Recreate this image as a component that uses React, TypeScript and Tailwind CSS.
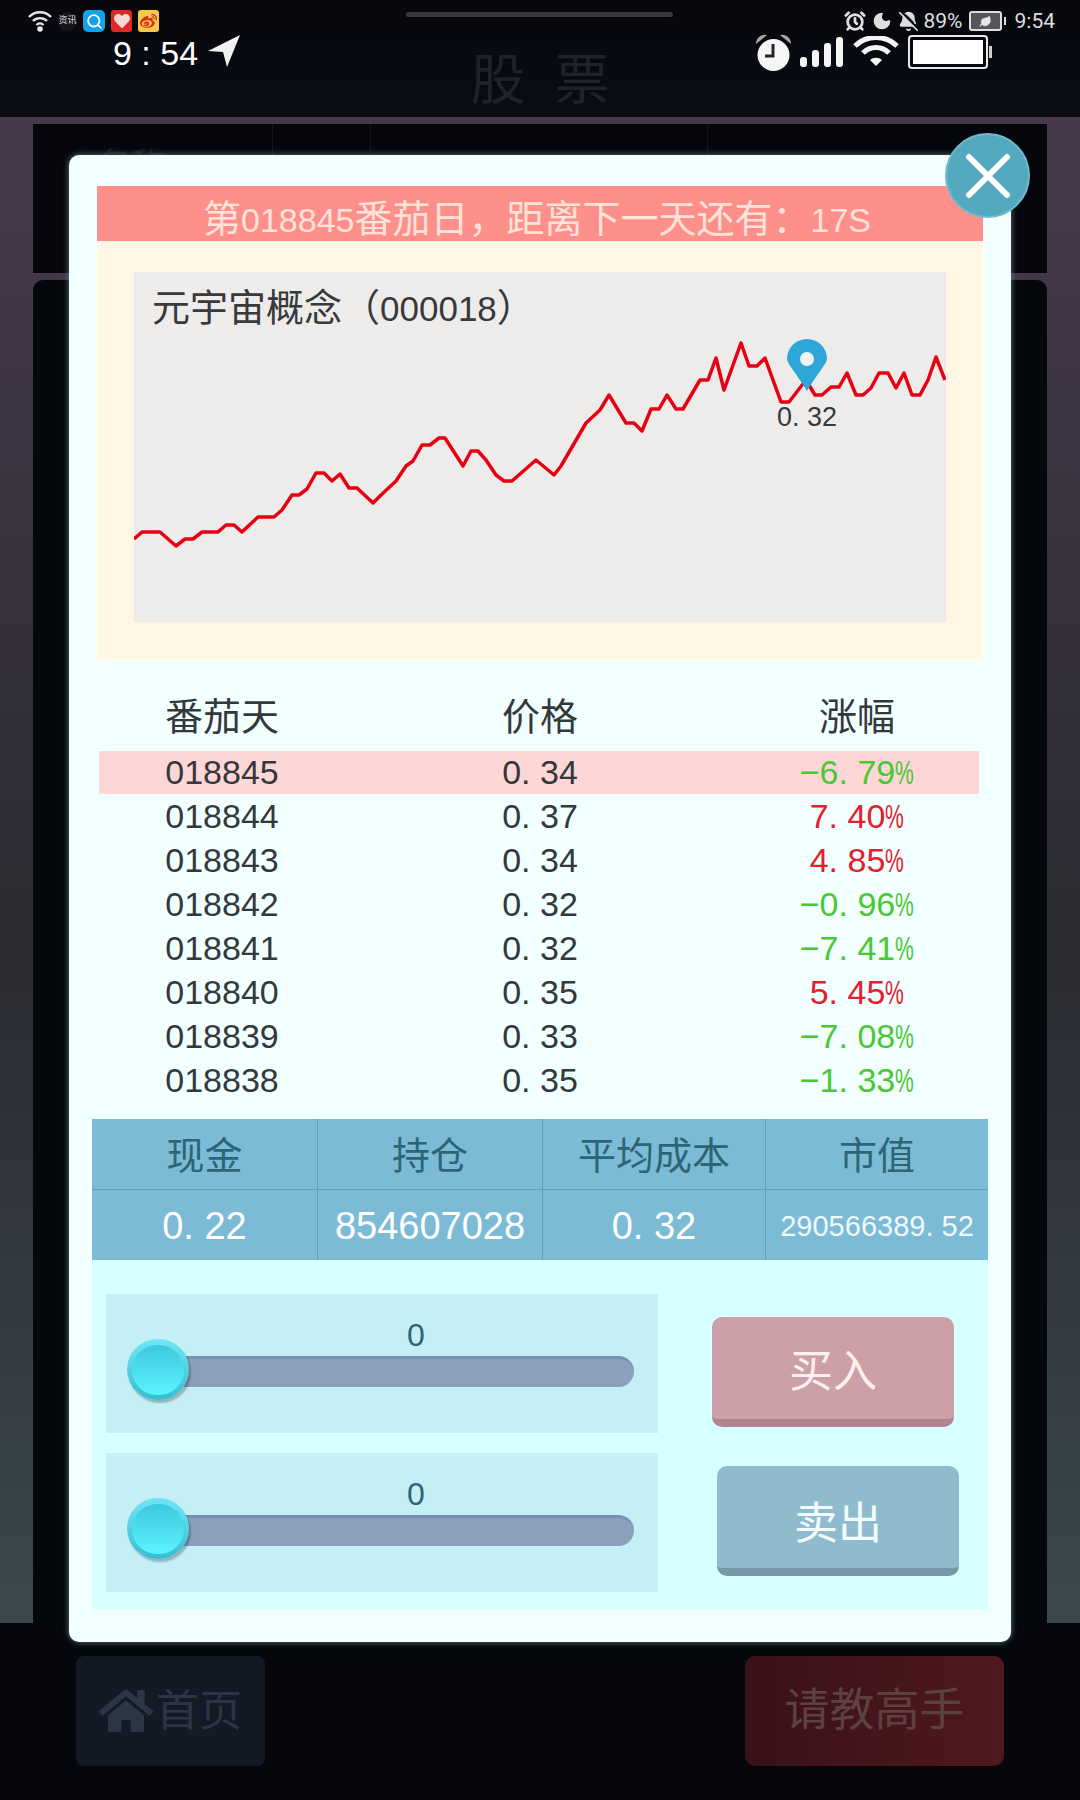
import { AlarmClock, BellOff, Leaf, Moon, Search } from 'lucide-react'
import { FaHeart, FaHome, FaWeibo } from 'react-icons/fa'

const ROWS = [
  { day: '018845', price: '0. 34', pct: '−6. 79', up: false },
  { day: '018844', price: '0. 37', pct: '7. 40', up: true },
  { day: '018843', price: '0. 34', pct: '4. 85', up: true },
  { day: '018842', price: '0. 32', pct: '−0. 96', up: false },
  { day: '018841', price: '0. 32', pct: '−7. 41', up: false },
  { day: '018840', price: '0. 35', pct: '5. 45', up: true },
  { day: '018839', price: '0. 33', pct: '−7. 08', up: false },
  { day: '018838', price: '0. 35', pct: '−1. 33', up: false },
]

// chart line, in px from the chart panel's top left corner
const LINE = [
  [0, 267], [8, 260], [26, 260], [42, 274], [51, 267], [59, 267], [68, 260], [84, 260], [92, 253], [100, 253],
  [108, 260], [124, 245], [140, 245], [148, 238], [158, 223], [165, 223], [173, 217], [182, 201], [190, 201],
  [198, 209], [206, 202], [215, 216], [223, 216], [239, 231], [247, 223], [262, 209], [272, 194], [279, 189],
  [288, 173], [296, 173], [305, 166], [311, 166], [329, 194], [337, 179], [344, 179], [352, 188], [362, 203],
  [370, 209], [378, 209], [402, 188], [420, 203], [427, 194], [452, 151], [466, 138], [475, 123], [492, 151],
  [500, 151], [508, 159], [517, 137], [525, 137], [533, 123], [542, 137], [549, 137], [566, 108], [574, 108],
  [582, 86], [590, 118], [607, 71], [615, 94], [623, 94], [631, 86], [647, 130], [655, 130], [672, 108],
  [681, 123], [688, 123], [697, 115], [705, 115], [713, 101], [722, 123], [729, 123], [737, 116], [745, 101],
  [754, 101], [762, 116], [770, 101], [778, 123], [786, 123], [794, 108], [802, 85], [811, 108],
]

function Pct({ value, up }: { value: string; up: boolean }) {
  return (
    <span className={up ? 'text-[#e5202e]' : 'text-[#48c832]'}>
      {value}
      <span className="inline-block w-[19px] origin-left scale-x-[0.62]">%</span>
    </span>
  )
}

function Slider() {
  return (
    <div className="h-[139px] bg-[#c4f0f5] pt-[21px]">
      <div className="h-[41px] pl-[68px] text-center text-[32px] leading-[40px] text-[#2d6577]">0</div>
      <div className="relative ml-[52px] h-[31px] w-[476px] rounded-r-full border-t-[3px] border-[#7590b0] bg-[#8aa0bd]">
        <div className="absolute -left-[31px] -top-[20px] flex h-[61px] w-[62px] items-center justify-center rounded-full bg-gradient-to-b from-[#6ee7f4] to-[#35bdd2] shadow-[2px_3px_2px_rgba(0,0,0,0.25)]">
          <div className="h-[50px] w-[52px] rounded-full bg-gradient-to-b from-[#3cc8e0] to-[#5cf4ff]" />
        </div>
      </div>
    </div>
  )
}

function StatusBar() {
  return (
    <div className="relative flex h-[43px] items-start justify-between bg-[#08090e] pl-[28px] pr-[25px] pt-[10px]">
      <div className="flex items-center">
        <svg width="24" height="22" viewBox="0 0 24 22" fill="none" stroke="#e8e8e8" strokeWidth="2.4">
          <path d="M1 7a15 15 0 0 1 22 0M5 11a10 10 0 0 1 14 0M8.5 15a5 5 0 0 1 7 0" />
          <circle cx="12" cy="19" r="1.6" fill="#e8e8e8" />
        </svg>
        <div className="ml-[6px] flex h-[19px] w-[19px] items-center justify-center rounded-full bg-[#15161b] text-[9px] text-[#d8d8d8]">资讯</div>
        <div className="ml-[6px] flex h-[22px] w-[22px] items-center justify-center rounded-[5px] bg-[#11a3ee]">
          <Search size={17} color="#fff" strokeWidth={2.6} />
        </div>
        <div className="ml-[6px] flex h-[22px] w-[21px] items-center justify-center rounded-[3px] bg-[#dc2a26]">
          <FaHeart size={16} color="#f6d9d5" />
        </div>
        <div className="ml-[6px] flex h-[22px] w-[21px] items-center justify-center rounded-[3px] bg-[#f7c948]">
          <FaWeibo size={17} color="#d92a1c" />
        </div>
      </div>
      <div className="absolute left-[406px] top-[12px] h-[5px] w-[267px] rounded-full bg-[#38393d]" />
      <div className="flex items-center text-[#dedede]">
        <AlarmClock size={22} strokeWidth={3} />
        <Moon size={20} fill="currentColor" className="ml-[6px]" />
        <BellOff size={21} fill="currentColor" className="ml-[6px]" />
        <span className="ml-[5px] font-['Roboto',sans-serif] text-[21px] leading-[22px]">89%</span>
        <div className="ml-[6px] flex h-[20px] w-[33px] items-center justify-center rounded-[3px] border-2 border-[#dedede] bg-[#55565a]">
          <Leaf size={13} fill="#e8e8e8" strokeWidth={1} />
        </div>
        <div className="ml-[2px] h-[8px] w-[2px] bg-[#dedede]" />
        <span className="ml-[9px] font-['Roboto',sans-serif] text-[21px] leading-[22px]">9:54</span>
      </div>
    </div>
  )
}

function Underlay() {
  return (
    <div className="flex h-[1800px] flex-col bg-[#05070b]">
      <StatusBar />
      <div className="flex h-[74px] items-center justify-center gap-[29px] bg-gradient-to-b from-[#070a11] to-[#0a0c12] text-[55px] text-[#1f2227]">
        <span>股</span>
        <span>票</span>
      </div>
      <div className="flex h-[1506px] flex-col bg-gradient-to-b from-[#47394c] via-[#2a2b31] via-55% to-[#3a484e] px-[33px] pt-[7px]">
        <div className="grid h-[149px] grid-cols-[240px_98px_337px_1fr] bg-[#06070d] text-[36px] text-[#16181e]">
          <div className="border-r border-[#14161c] pl-[62px] pt-[16px]">名称</div>
          <div className="border-r border-[#14161c]" />
          <div className="border-r border-[#14161c]" />
          <div />
        </div>
        <div className="mt-[7px] flex-1 rounded-t-[10px] bg-[#04070b]" />
      </div>
      <div className="flex flex-1 items-start justify-between bg-[#05070c] pl-[76px] pr-[76px] pt-[33px]">
        <div className="flex h-[110px] w-[189px] items-center justify-center rounded-[8px] bg-[#131925] text-[43px] text-[#2c3544]">
          <FaHome size={54} />
          <span className="ml-[3px]">首页</span>
        </div>
        <div className="flex h-[110px] w-[259px] items-center justify-center rounded-[10px] bg-gradient-to-r from-[#3a1116] to-[#4f191e] text-[45px] text-[#5d4040]">
          请教高手
        </div>
      </div>
    </div>
  )
}

function Modal() {
  const points = LINE.map(p => p.join(',')).join(' ')

  return (
    <div className="absolute left-[69px] top-[155px] h-[1487px] w-[942px] rounded-[10px] bg-[#f2ffff] pt-[31px] shadow-[0_0_6px_rgba(150,190,200,0.6)]">
      <button className="absolute left-[876px] -top-[22px] flex h-[85px] w-[85px] items-center justify-center rounded-full border-2 border-[#6dbccd] bg-[#55a9bf]">
        <svg width="46" height="46" viewBox="0 0 46 46" stroke="#fff" strokeWidth="6" strokeLinecap="round">
          <path d="M4 4l38 38M42 4L4 42" />
        </svg>
      </button>

      <div className="mx-[28px] h-[55px] bg-[#ff8f8b] pr-[6px] pt-[5px] text-center text-[38px] leading-[56px] text-[#ffe3d8]">
        第<span className="text-[34px]">018845</span>番茄日，距离下一天还有：<span className="text-[34px]">17S</span>
      </div>

      <div className="mx-[28px] h-[419px] bg-[#fff7e3] px-[37px] pt-[31px]">
        <div className="relative h-[350px] w-[812px] bg-[#eeeceb] pl-[18px] pt-[12px] text-[38px] leading-[48px] text-[#37393b]">
          元宇宙概念（<span className="text-[35px]">000018</span>）
          <svg className="absolute left-0 top-0" width="812" height="350" fill="none">
            <polyline points={points} stroke="#e60012" strokeWidth="3.5" strokeLinejoin="round" />
            <path
              d="M673 119C664 104 653 91 653 87a20 20 0 0 1 40 0c0 4-11 17-20 32z"
              fill="#2fa6d8"
            />
            <circle cx="673" cy="87" r="7" fill="#eef4f6" />
          </svg>
          <div className="absolute left-[633px] top-[127px] w-[80px] text-center text-[27px] leading-[36px] text-[#37393b]">0. 32</div>
        </div>
      </div>

      <div className="mx-[30px] grid h-[91px] w-[880px] grid-cols-[246px_390px_244px] items-center pt-[24px] text-center text-[38px] text-[#33383c]">
        <div>番茄天</div>
        <div>价格</div>
        <div>涨幅</div>
      </div>
      <div className="mx-[30px] w-[880px]">
        {ROWS.map((r, i) => (
          <div key={r.day} className="h-[44px]">
            <div className={`grid h-[43px] grid-cols-[246px_390px_244px] items-center text-center text-[34px] leading-[43px] text-[#33383c] ${i === 0 ? 'bg-[#ffd6d6]' : ''}`}>
              <div>{r.day}</div>
              <div>{r.price}</div>
              <div><Pct value={r.pct} up={r.up} /></div>
            </div>
          </div>
        ))}
      </div>

      <div className="mx-[23px] mt-[16px] grid h-[141px] grid-cols-[226px_225px_223px_222px] grid-rows-[71px_70px] bg-[#7bbbd6] text-center">
        {['现金', '持仓', '平均成本'].map(h => (
          <div key={h} className="flex items-center justify-center border-b border-r border-[#5da0bb] pt-[5px] text-[38px] text-[#2d6577]">{h}</div>
        ))}
        <div className="flex items-center justify-center border-b border-[#5da0bb] pt-[5px] text-[38px] text-[#2d6577]">市值</div>
        <div className="flex items-center justify-center border-r border-[#5da0bb] pt-[3px] text-[38px] text-white">0. 22</div>
        <div className="flex items-center justify-center border-r border-[#5da0bb] pt-[3px] text-[38px] text-white">854607028</div>
        <div className="flex items-center justify-center border-r border-[#5da0bb] pt-[3px] text-[38px] text-white">0. 32</div>
        <div className="flex items-center justify-center pt-[3px] text-[29px] text-[#eefaff]">290566389. 52</div>
      </div>

      <div className="mx-[23px] flex h-[349px] bg-[#d6ffff] px-[14px] pt-[34px]">
        <div className="flex w-[552px] flex-col gap-[20px]">
          <Slider />
          <Slider />
        </div>
        <div className="ml-[54px] pt-[23px]">
          <button className="flex h-[110px] w-[242px] items-center justify-center rounded-[10px] border-b-[8px] border-[#b0858f] bg-[#cda0a7] pt-[8px] text-[44px] text-[#fdf0f0]">买入</button>
          <button className="ml-[5px] mt-[39px] flex h-[110px] w-[242px] items-center justify-center rounded-[10px] border-b-[8px] border-[#7798a8] bg-[#8fbccd] pt-[14px] text-[44px] text-[#f4fbff]">卖出</button>
        </div>
      </div>
    </div>
  )
}

export default function App() {
  return (
    <div className="relative h-[1800px] w-[1080px] overflow-hidden font-['Liberation_Sans','Noto_Sans_CJK_SC',sans-serif]">
      <Underlay />

      {/* second status row sits on top of the app header */}
      <div className="absolute left-[113px] top-[32px] flex h-[40px] w-[879px] items-center justify-between text-white">
        <div className="flex items-center">
          <span className="mt-[2px] text-[34px] leading-[40px]">9 : 54</span>
          <svg width="34" height="34" viewBox="0 0 34 34" className="ml-[9px] -mt-[2px]" fill="#f2f2f2">
            <path d="M33 1L1 17l15 1 4 15z" />
          </svg>
        </div>
        <div className="flex items-center">
          <svg width="37" height="40" viewBox="0 0 37 40">
            <path d="M1 12a9 9 0 0 1 11-9zM36 12a9 9 0 0 0-11-9z" fill="#a8a8a8" />
            <circle cx="18.5" cy="23" r="16" fill="#f5f5f5" />
            <path d="M18 12v12h-8" stroke="#20242a" strokeWidth="3" fill="none" />
          </svg>
          <svg width="46" height="32" viewBox="0 0 46 32" fill="#f5f5f5" className="ml-[7px]">
            <rect x="1" y="21" width="7" height="10" rx="3" />
            <rect x="13" y="14" width="7" height="17" rx="3" />
            <rect x="25" y="7" width="7" height="24" rx="3" />
            <rect x="37" y="1" width="7" height="30" rx="3" />
          </svg>
          <svg width="46" height="32" viewBox="0 0 46 32" fill="none" stroke="#f5f5f5" strokeWidth="5" className="ml-[8px]">
            <path d="M2 10a30 30 0 0 1 42 0M10 17a18 18 0 0 1 26 0" />
            <path d="M17 24l6 6 6-6a9 9 0 0 0-12 0z" fill="#f5f5f5" stroke="none" />
          </svg>
          <div className="ml-[9px] flex h-[34px] w-[80px] items-center rounded-[4px] border-2 border-[#e8e8e8] p-[3px]">
            <div className="h-full w-full bg-white" />
          </div>
          <div className="ml-[1px] h-[12px] w-[3px] bg-[#cfcfcf]" />
        </div>
      </div>

      <Modal />
    </div>
  )
}
